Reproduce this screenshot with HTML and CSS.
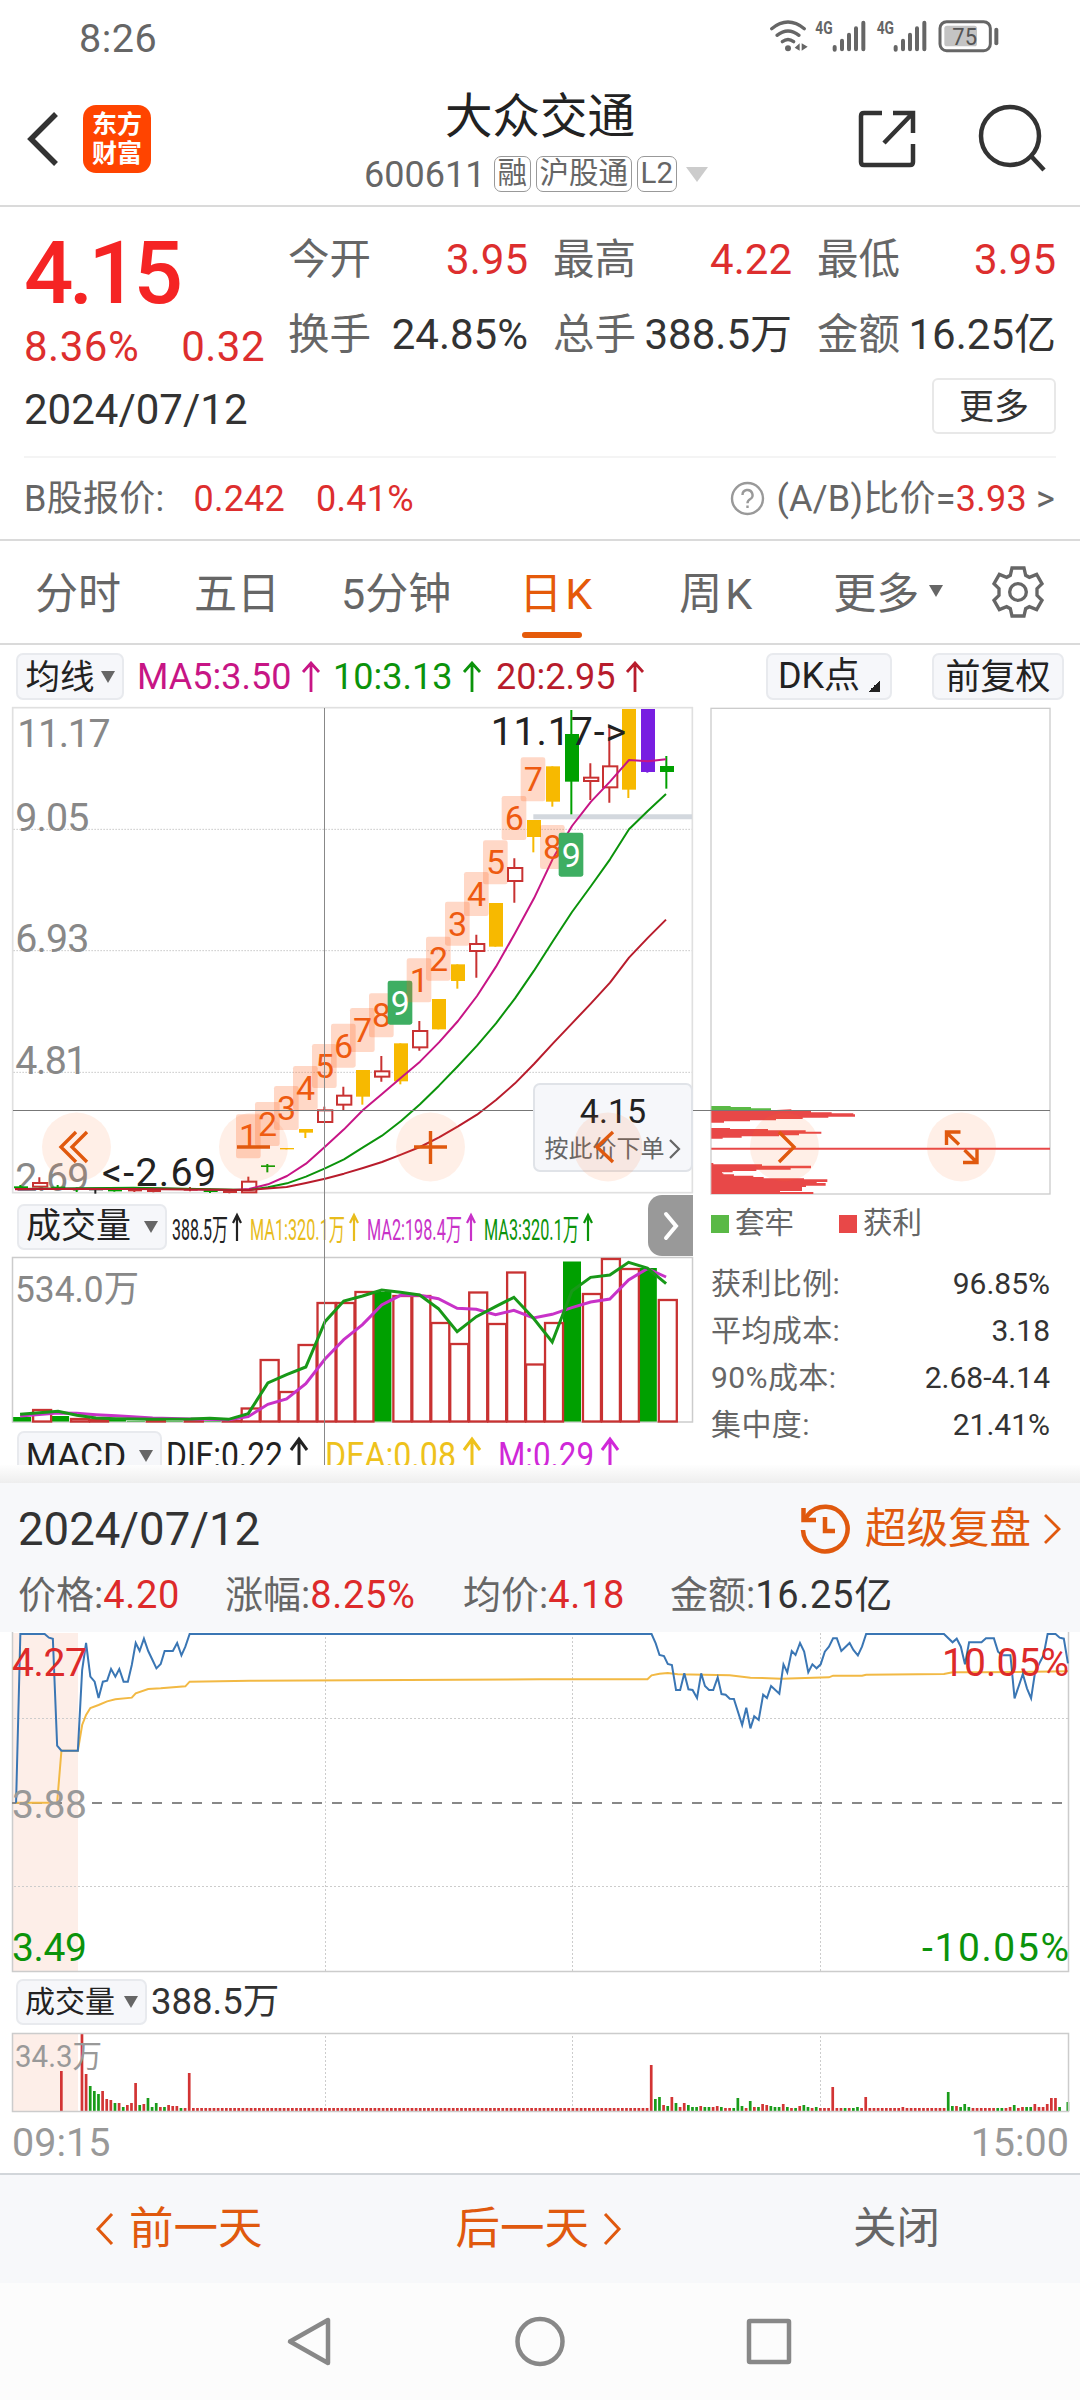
FILE: index.html
```html
<!DOCTYPE html>
<html lang="zh-CN">
<head>
<meta charset="utf-8">
<title>大众交通 600611</title>
<link rel="stylesheet" href="styles.css">
</head>
<body>
<header class="status">
  <span class="clock">8:26</span>
  <svg class="status-icons" width="250" height="50" viewBox="0 0 750 150" fill="none" stroke="#666" stroke-linecap="round">
    <path d="M35 56Q84 16 133 56M51 76Q84 50 117 76M67 95Q84 82 101 95" stroke-width="10"/>
    <circle cx="84" cy="115" r="9" fill="#666" stroke="none"/>
    <path d="M119 100v22l-15-9zM125 100v22l18-12z" fill="#666" stroke="none"/>
    <g stroke-width="12">
      <path d="M224 111v8M246 92v26M267 74v44M288 55v63M310 38v80"/>
      <path d="M407 111v8M429 92v26M450 74v44M471 55v63M493 38v80"/>
    </g>
    <g class="net" fill="#666" stroke="none">
      <text x="166" y="72" textLength="52" lengthAdjust="spacingAndGlyphs">4G</text>
      <text x="350" y="72" textLength="52" lengthAdjust="spacingAndGlyphs">4G</text>
    </g>
    <rect x="540" y="35" width="151" height="87" rx="20" stroke-width="9"/>
    <path d="M709 59v41" stroke-width="12"/>
    <rect x="553" y="47" width="98" height="62" rx="8" fill="#c4c4c4" stroke="none"/>
    <text class="pct" x="577" y="105" fill="#555" stroke="none" textLength="74" lengthAdjust="spacingAndGlyphs">75</text>
  </svg>
</header>

<nav class="topbar">
  <svg class="back" width="34" height="56" viewBox="0 0 34 56" fill="none" stroke="#333" stroke-width="5.500"><path d="M31 3L6 28l25 25"/></svg>
  <div class="logo"><span>东方</span><span>财富</span></div>
  <div class="stock">
    <h1>大众交通</h1>
    <div class="code"><span class="num">600611</span><span class="tag">融</span><span class="tag">沪股通</span><span class="tag">L2</span><i class="caret"></i></div>
  </div>
  <svg class="share" width="60" height="60" viewBox="0 0 60 60" fill="none" stroke="#333" stroke-width="4.5"><path d="M25 4H7q-3 0-3 3v46q0 3 3 3h46q3 0 3-3V35M36 4h20v20M55 5L27 34"/></svg>
  <svg class="search" width="70" height="70" viewBox="0 0 70 70" fill="none" stroke="#333" stroke-width="4.5"><circle cx="33" cy="33" r="29"/><path d="M54 53l13 14"/></svg>
</nav>

<section class="quote">
  <div class="quote-top">
    <div class="price">
      <strong>4.15</strong>
      <div class="change"><span>8.36%</span><span>0.32</span></div>
    </div>
    <dl class="metrics">
      <div><dt>今开</dt><dd class="up">3.95</dd></div>
      <div><dt>最高</dt><dd class="up">4.22</dd></div>
      <div><dt>最低</dt><dd class="up">3.95</dd></div>
      <div><dt>换手</dt><dd>24.85%</dd></div>
      <div><dt>总手</dt><dd>388.5万</dd></div>
      <div><dt>金额</dt><dd>16.25亿</dd></div>
    </dl>
  </div>
  <div class="quote-date"><span>2024/07/12</span><button class="more">更多</button></div>
  <div class="bshare">
    <span class="label">B股报价:</span><span class="up b1">0.242</span><span class="up b2">0.41%</span>
    <svg class="help" width="35" height="35" viewBox="0 0 35 35" fill="none" stroke="#999" stroke-width="2.4"><circle cx="17.500" cy="17.500" r="15.500"/><path d="M12.500 14a5 5 0 1 1 7.500 4.300q-2.500 1.500-2.500 4M17.500 24.500v2.500"/></svg>
    <span class="ratio">(A/B)比价=<b class="up">3.93</b></span><span class="gt">&gt;</span>
  </div>
</section>

<nav class="tabs">
  <span class="tab t1">分时</span><span class="tab t2">五日</span><span class="tab t3">5分钟</span><span class="tab t4 active">日K</span><span class="tab t5">周K</span><span class="tab t6">更多<i class="caret"></i></span>
  <svg class="gear" width="54" height="54" viewBox="454 17 162 162" fill="none" stroke="#666" stroke-width="10"><path d="M517 26H553L558 48L569 54L591 45L607 73L592 88V108L607 123L591 151L569 142L558 148L553 170H517L512 148L501 142L479 151L463 123L478 108V88L463 73L479 45L501 54L512 48Z"/><circle cx="535" cy="98" r="25"/></svg>
</nav>

<main class="charts">
  <div class="ma-row">
    <span class="chip ma-chip">均线<i class="caret"></i></span>
    <span class="ma m5">MA5:3.50<svg class="arr" viewBox="0 0 20 32"><path d="M10 31V2M2 11l8-9 8 9"/></svg></span>
    <span class="ma m10">10:3.13<svg class="arr" viewBox="0 0 20 32"><path d="M10 31V2M2 11l8-9 8 9"/></svg></span>
    <span class="ma m20">20:2.95<svg class="arr" viewBox="0 0 20 32"><path d="M10 31V2M2 11l8-9 8 9"/></svg></span>
    <span class="chip dk">DK点<i class="corner"></i></span>
    <span class="chip fq">前复权</span>
  </div>

  <div class="panes">
    <div class="left">
      <svg class="kline" width="700" height="500" viewBox="0 0 2100 1500">
        <rect x="38" y="23" width="2039" height="1455" fill="none" stroke="#e0e0e0" stroke-width="5"/>
        <path d="M40 388H2075M40 752H2075M40 1117H2075" stroke="#ccc" stroke-width="3" stroke-dasharray="5 4"/>
        <path d="M1600 350H2076" stroke="#d3d8de" stroke-width="15"/>
        <g class="axis">
          <text x="52" y="142" textLength="280">11.17</text>
          <text x="46" y="394" textLength="222">9.05</text>
          <text x="46" y="757" textLength="222">6.93</text>
          <text x="46" y="1122" textLength="216">4.81</text>
          <text x="46" y="1474" textLength="222">2.69</text>
        </g>
        <g id="candles"></g>
        <g class="line">
          <polyline stroke="#c71585" points="45,1468 400,1464 700,1470 747,1467 804,1453 861,1428 918,1391 975,1340 1032,1288 1089,1230 1146,1182 1203,1133 1260,1085 1317,1027 1374,963 1431,888 1488,800 1545,700 1602,595 1659,475 1716,378 1773,305 1830,245 1887,180 1944,184 1998,178"/>
          <polyline stroke="#0b930b" points="45,1467 400,1463 747,1470 804,1462 861,1450 918,1430 975,1405 1032,1378 1089,1342 1146,1307 1203,1263 1260,1213 1317,1157 1374,1098 1431,1037 1488,970 1545,895 1602,812 1659,723 1716,636 1773,558 1830,478 1887,388 1944,332 1998,282"/>
          <polyline stroke="#b81c2c" points="45,1467 400,1467 747,1470 860,1461 918,1449 975,1436 1032,1421 1089,1404 1146,1386 1203,1364 1260,1341 1317,1312 1374,1279 1431,1244 1488,1200 1545,1150 1602,1092 1659,1030 1716,970 1773,910 1830,848 1887,773 1944,713 1998,659"/>
        </g>
        <g id="counts"></g>
        <g class="mark">
          <text x="306" y="1457" textLength="342">&lt;-2.69</text>
          <text x="1472" y="135" textLength="406">11.17-&gt;</text>
        </g>
      </svg>
      <div class="ind-row">
        <span class="chip vol-chip">成交量<i class="caret"></i></span>
        <svg class="ind" width="460" height="50" viewBox="170 1200 460 50">
          <text x="172" y="1239" fill="#222" textLength="56" lengthAdjust="spacingAndGlyphs">388.5万</text>
          <text x="250" y="1239" fill="#e8bc1c" textLength="95" lengthAdjust="spacingAndGlyphs">MA1:320.1万</text>
          <text x="367" y="1239" fill="#c832c8" textLength="95" lengthAdjust="spacingAndGlyphs">MA2:198.4万</text>
          <text x="484" y="1239" fill="#0b930b" textLength="95" lengthAdjust="spacingAndGlyphs">MA3:320.1万</text>
          <g fill="none" stroke-width="2.200"><path stroke="#222" d="M237 1240v-26m-4 8l4-8 4 8"/><path stroke="#e8bc1c" d="M354 1240v-26m-4 8l4-8 4 8"/><path stroke="#c832c8" d="M471 1240v-26m-4 8l4-8 4 8"/><path stroke="#0b930b" d="M588 1240v-26m-4 8l4-8 4 8"/></g>
        </svg>
      </div>
      <svg class="volume" width="700" height="170" viewBox="0 1255 700 170">
        <rect x="12.500" y="1257.500" width="680" height="164.500" fill="none" stroke="#ccc" stroke-width="1.500"/>
        <text class="axis-sm" x="15" y="1302" textLength="124" lengthAdjust="spacingAndGlyphs">534.0万</text>
        <g id="volbars"></g>
        <g class="vline" transform="translate(0 1190) scale(.446429 .333333)">
          <polyline stroke="#c832c8" points="45,678 130,669 172,670 215,674 260,677 342,684 427,687 512,689 556,680 600,643 642,627 685,581 728,507 770,449 812,404 855,345 897,316 940,316 982,326 1024,355 1067,358 1110,374 1151,361 1195,384 1237,373 1281,353 1323,336 1366,327 1408,270 1450,236 1492,261"/>
          <polyline stroke="#189818" points="45,673 88,668 130,664 172,676 215,684 260,686 342,688 427,687 470,685 512,688 556,671 600,579 642,554 685,531 728,395 770,333 812,318 855,300 897,307 940,315 982,356 1024,425 1067,380 1110,350 1151,322 1195,385 1237,456 1281,303 1323,262 1366,255 1408,217 1450,234 1492,281"/>
        </g>
      </svg>
      <div class="macd-row">
        <span class="chip macd-chip">MACD<i class="caret"></i></span>
        <svg class="macd" width="470" height="34" viewBox="160 1431 470 34">
          <g stroke="none"><text x="166" y="1468" fill="#222" textLength="117" lengthAdjust="spacingAndGlyphs">DIF:0.22</text>
          <text x="325" y="1468" fill="#eec21c" textLength="131" lengthAdjust="spacingAndGlyphs">DEA:0.08</text>
          <text x="498" y="1468" fill="#d028d8" textLength="96" lengthAdjust="spacingAndGlyphs">M:0.29</text></g>
          <g fill="none" stroke-width="3"><path stroke="#222" d="M299 1466v-27m-8 11l8-11 8 11"/><path stroke="#eec21c" d="M472 1466v-27m-8 11l8-11 8 11"/><path stroke="#d028d8" d="M610 1466v-27m-8 11l8-11 8 11"/></g>
        </svg>
      </div>
    </div>

    <div class="right">
      <svg class="costs" width="380" height="500" viewBox="2100 0 1140 1500">
        <rect x="2133" y="25" width="1017" height="1457" fill="none" stroke="#ccc" stroke-width="4"/>
        <g transform="translate(2070 1140)">
          <path fill="#5ab946" d="M64 78H122V81H183V85H243V91H64Z"/>
          <path fill="#e84848" d="M64 91H245L304 88V91H363V97H425V100H490V103H495V110H415V113H338V117H258V121H180V124H102V128H64ZM64 144H120V147H234V151H347V155H394V161H327V166H267V169H155V173H98V176H64ZM64 203H1080V209H64ZM64 249H70V253H216V257H363V265H302V269H199V273H128V277H96V280H100V283H132V287H190V291H221V295H342V298H412V306H380V309H407V317H348V321H336V333H270V336H370V342H64Z"/>
        </g>
      </svg>
      <div class="legend"><span><i class="sq g"></i>套牢</span><span><i class="sq r"></i>获利</span></div>
      <dl class="stats">
        <div><dt>获利比例:</dt><dd>96.85%</dd></div>
        <div><dt>平均成本:</dt><dd>3.18</dd></div>
        <div><dt>90%成本:</dt><dd>2.68-4.14</dd></div>
        <div><dt>集中度:</dt><dd>21.41%</dd></div>
      </dl>
    </div>

    <i class="cross-h"></i><i class="cross-v"></i>
    <div class="order"><b>4.15</b><span>按此价下单<svg width="14" height="22" viewBox="0 0 14 22" fill="none" stroke="#666" stroke-width="2.200"><path d="M2 2l9 9-9 9"/></svg></span></div>
    <span class="side-handle"><svg width="16" height="30" viewBox="0 0 16 30" fill="none" stroke="#fff" stroke-width="4" stroke-linecap="round"><path d="M3 3l10 12L3 27"/></svg></span>
    <svg class="tools" width="1080" height="80" viewBox="0 0 1080 80" fill="none" stroke="#e0590e" stroke-width="3.400">
      <g fill="#ff7020" fill-opacity=".11" stroke="none"><circle cx="76.500" cy="40" r="34.500"/><circle cx="253.500" cy="40" r="34.500"/><circle cx="430.500" cy="40" r="34.500"/><circle cx="608" cy="40" r="34.500"/><circle cx="784.500" cy="40" r="34.500"/><circle cx="961.500" cy="40" r="34.500"/></g>
      <path d="M76 25L61 40l15 15M87 25L72 40l15 15M237 40h33M414 40h33M430.500 24v33M613 25l-16 15 16 15M779 25l15 15-15 15"/>
      <path d="M946.500 38V25h14M947 26l12 11.500M964.500 43l12 12M963 55.500h14V42"/>
    </svg>
  </div>
</main>

<section class="day">
  <div class="day-head">
    <div class="day-title"><span class="date">2024/07/12</span>
      <svg class="replay" width="52" height="52" viewBox="0 0 52 52" fill="none" stroke="#e0590e" stroke-width="4.500"><path d="M4 27A22.300 22.300 0 1 0 9 12L6 16"/><path d="M4.500 5v12H17M26 14v14h10" /></svg>
      <span class="replay-text">超级复盘</span>
      <svg class="chev" width="20" height="32" viewBox="0 0 20 32" fill="none" stroke="#e0590e" stroke-width="2.800"><path d="M2 2l14 14L2 30"/></svg>
    </div>
    <div class="day-data"><span class="d1">价格:<b class="up">4.20</b></span><span class="d2">涨幅:<b class="up">8.25%</b></span><span class="d3">均价:<b class="up">4.18</b></span><span class="d4">金额:<b>16.25亿</b></span></div>
  </div>
  <svg class="intraday" width="1080" height="342" viewBox="0 1632 1080 342">
    <rect x="12" y="1633" width="66" height="338" fill="#fdeee8"/>
    <path d="M12.500 1632V1971.500H1068.500V1632" fill="none" stroke="#ccc" stroke-width="1.500"/>
    <path d="M14 1718.500H1068M14 1886.500H1068M325.500 1637V1971M572.500 1633V1971M820.500 1633V1971" stroke="#ccc" stroke-dasharray="2 2"/>
    <path d="M92 1803H1066" stroke="#888" stroke-width="2" stroke-dasharray="10 10"/>
    <path d="M12 1803H62" stroke="#888" stroke-width="2" stroke-dasharray="10 10"/>
    <g class="series">
      <g transform="translate(0 1470) scale(.357143 .333333)">
        <polyline stroke="#f2b944" points="45,998 160,998 172,842 218,842 230,765 241,735 253,714 276,705 300,694 323,688 369,683 380,670 415,657 450,655 519,649 531,635 700,632 1512,628"/>
        <polyline stroke="#3a76b4" points="45,998 57,492 125,492 137,503 148,506 160,827 172,842 218,842 230,600 241,519 253,620 265,635 276,684 288,635 300,632 311,597 323,620 334,597 346,635 358,635 369,585 380,519 391,543 403,506 415,543 427,570 438,595 450,582 461,543 484,543 496,519 508,556 519,530 531,492 1512,492"/>
      </g>
      <g transform="translate(540 1470) scale(.344388 .333333)">
        <polyline stroke="#f2b944" points="0,628 312,628 324,616 347,611 371,609 400,613 551,616 611,623 700,626 839,622 851,617 935,617 947,614 1173,612 1198,607 1282,607 1533,604"/>
        <polyline stroke="#3a76b4" points="0,492 324,492 336,520 347,555 360,558 371,582 383,585 395,660 407,660 419,610 431,658 443,660 456,684 468,610 479,648 491,660 503,660 516,622 527,672 539,674 551,686 563,687 587,765 599,713 611,775 622,739 635,750 648,674 659,684 671,648 695,671 707,583 718,607 731,543 742,555 755,519 767,545 779,607 791,583 803,595 815,583 827,545 839,530 851,505 862,505 875,543 899,519 910,540 923,556 935,530 947,492 1173,492 1198,517 1210,506 1222,530 1234,583 1246,517 1282,517 1295,505 1318,505 1330,545 1342,556 1366,556 1378,685 1402,612 1414,655 1426,685 1437,610 1450,580 1462,556 1474,492 1497,492 1509,503 1521,506 1533,580"/>
      </g>
    </g>
    <g class="scale">
      <text x="12" y="1676" fill="#dd2a2a" textLength="75">4.27</text>
      <text x="12" y="1818" fill="#999" textLength="75">3.88</text>
      <text x="12" y="1961" fill="#0b930b" textLength="75">3.49</text>
      <text x="942" y="1676" fill="#dd2a2a" textLength="127">10.05%</text>
      <text x="922" y="1961" fill="#0b930b" textLength="147">-10.05%</text>
    </g>
  </svg>
  <div class="dvol-row"><span class="chip dvol-chip">成交量<i class="caret"></i></span><span class="dvol">388.5万</span></div>
  <svg class="dayvol" width="1080" height="82" viewBox="0 2032 1080 82">
    <rect x="12" y="2034" width="66" height="78" fill="#fdeee8"/>
    <path d="M325.500 2037V2111M572.500 2037V2111M820.500 2037V2111" stroke="#ccc" stroke-dasharray="2 2"/>
    <g id="daybars"></g>
    <rect x="12.500" y="2034.500" width="1056" height="78" fill="none" stroke="#ccc" stroke-width="1.500"/>
    <text x="15" y="2068" class="axis-xs" textLength="87" lengthAdjust="spacingAndGlyphs">34.3万</text>
  </svg>
  <div class="hours"><span>09:15</span><span>15:00</span></div>
</section>

<footer class="pager">
  <span class="prev"><svg width="20" height="32" viewBox="0 0 20 32" fill="none" stroke="#e0590e" stroke-width="3"><path d="M17 1L3 16l14 15"/></svg>前一天</span>
  <span class="next">后一天<svg width="20" height="32" viewBox="0 0 20 32" fill="none" stroke="#e0590e" stroke-width="3"><path d="M3 1l14 15L3 31"/></svg></span>
  <span class="close">关闭</span>
</footer>
<div class="sysnav">
  <svg width="1080" height="118" viewBox="0 2282 1080 118" fill="none" stroke="#888" stroke-width="4.500" stroke-linejoin="round"><path d="M328 2319V2362L290 2340.500Z"/><circle cx="540" cy="2340.500" r="22.500"/><rect x="749" y="2320" width="40" height="41" rx="1"/></svg>
</div>
<script src="charts.js"></script>
</body>
</html>
```
FILE: styles.css
```css
* { box-sizing: border-box; margin: 0; padding: 0; }
body { width: 1080px; height: 2400px; overflow: hidden; background: #fff; color: #333; font-family: Roboto, "Noto Sans CJK SC", sans-serif; line-height: 1; white-space: nowrap; }
svg { display: block; flex: none; }
b, h1 { font-weight: 400; }
i { font-style: normal; }
button { font: inherit; color: inherit; }
.up { color: #dd2e2e; }
.caret { display: inline-block; width: 0; height: 0; border: solid transparent; border-width: 12px 7.5px 0; border-top-color: #666; }

.status { height: 75px; display: flex; align-items: center; justify-content: space-between; padding-left: 79px; color: #666; }
.clock { font-size: 39.500px; padding-top: 3px; letter-spacing: .5px; }
.status-icons { margin: -5px 70px 0 0; }
.net { font-size: 54px; font-weight: 700; }
.pct { font-size: 70px; }

.topbar { height: 132px; display: flex; border-bottom: 2px solid #dadada; position: relative; }
.back { margin: 36px 0 0 25px; }
.logo { margin: 30px 0 0 24px; width: 68px; height: 68px; border-radius: 13px; background: #ff4400; color: #fff; font-size: 25px; font-weight: 700; display: flex; flex-direction: column; align-items: center; justify-content: center; gap: 4px; }
.stock { margin-left: 213px; width: 355px; }
.stock h1 { font-size: 47.500px; line-height: 56px; margin: 14px 0 0 81px; color: #222; }
.code { display: flex; align-items: center; color: #666; margin-top: 10px; height: 38px; }
.code .num { font-size: 36px; width: 130px; padding-top: 2px; }
.tag { height: 36px; line-height: 33px; border: 1.500px solid #999; border-radius: 7px; font-size: 29.500px; padding: 0 2.500px; margin-right: 5.500px; }
.code .caret { border-width: 15px 11px 0; border-top-color: #ccc; margin-left: 4px; }
.share { margin: 34px 0 0 138px; }
.search { margin: 28px 0 0 60px; }

.quote { height: 334px; border-bottom: 2px solid #dadada; }
.quote-top { display: flex; height: 167px; }
.price { width: 288px; padding: 23px 0 0 24px; color: #f52424; }
.price strong { display: block; font-size: 87px; font-weight: 500; letter-spacing: -4.500px; line-height: 87px; }
.change { display: flex; gap: 42px; font-size: 42px; letter-spacing: .500px; line-height: 42px; margin-top: 9px; color: #dd2e2e; }
.metrics { width: 768px; display: grid; grid-template-columns: 240px 239px 239px; column-gap: 25px; grid-auto-rows: 75px; padding-top: 15px; font-size: 42px; }
.metrics div { display: flex; justify-content: space-between; align-items: center; }
.metrics dt { color: #666; font-size: 41.500px; }
.quote-date { height: 84px; margin: 0 24px; display: flex; align-items: center; justify-content: space-between; font-size: 42px; border-bottom: 2px solid #f4f4f4; }
.quote-date span { margin-top: -11px; }
.more { width: 124px; height: 56px; border: 2px solid #e8e8e8; border-radius: 6px; background: #fff; font-size: 35px; margin-top: -19px; padding-top: 3px; }
.bshare { height: 80px; display: flex; align-items: center; padding: 1px 24px 0; font-size: 36px; letter-spacing: .25px; color: #666; }
.b1 { margin-left: 29px; } .b2 { margin-left: 31px; }
.help { margin-left: auto; margin-right: 11px; }
.gt { margin-left: 9px; width: 20px; }

.tabs { height: 104px; border-bottom: 2px solid #dadada; display: flex; color: #666; font-size: 43px; }
.tab { line-height: 107px; position: relative; height: 104px; }
.t1 { margin-left: 35px; } .t2 { margin-left: 73px; } .t3 { margin-left: 61px; } .t4 { margin-left: 68px; } .t5 { margin-left: 84px; } .t6 { margin-left: 78px; }
.t4, .t5 { letter-spacing: 3px; }
.tab .caret { margin-left: 10px; vertical-align: 12px; }
.active { color: #e55a0a; }
.active::after { content: ""; position: absolute; left: 3px; bottom: 7px; width: 60px; height: 6px; border-radius: 3px; background: #e55a0a; }
.gear { margin: 24px 35px 0 auto; }

.charts { height: 838px; background: #fff; overflow: hidden; position: relative; }
.charts::after { content: ""; position: absolute; left: 0; right: 0; bottom: 0; height: 18px; background: linear-gradient(#fefefe, #eee); }
.ma-row { height: 54px; padding-top: 8px; display: flex; align-items: center; font-size: 36px; }
.chip { display: flex; flex: none; align-items: center; justify-content: center; background: #f6f7fa; border: 2px solid #e8eaee; border-radius: 7px; color: #222; }
.ma-chip { margin-left: 16px; width: 108px; height: 47px; font-size: 34.500px; gap: 6px; padding-top: 2px; }
.ma { display: flex; align-items: center; padding-top: 2px; }
.arr { width: 20px; height: 32px; margin-left: 10px; fill: none; stroke: currentColor; stroke-width: 2.800; }
.m5 { color: #c71585; margin-left: 13px; width: 196px; }
.m10 { color: #0b930b; width: 163px; }
.m20 { color: #b81c2c; width: 154px; }
.dk { margin-left: 116px; width: 126px; height: 47px; font-size: 36px; }
.corner { width: 12px; height: 12px; background: linear-gradient(135deg, transparent 50%, #222 50%); margin: 20px 0 0 8px; }
.fq { margin-left: 40px; width: 132px; height: 47px; font-size: 35px; padding-top: 2px; }
.panes { display: flex; position: relative; height: 766px; overflow: hidden; }
.left { width: 700px; margin-top: 1px; }
.right { width: 380px; margin-top: 1px; }
.axis { font-size: 118px; fill: #888; }
.mark { font-size: 118px; fill: #222; }
.line polyline { fill: none; stroke-width: 6; stroke-linejoin: round; }
.vline polyline, .series polyline { fill: none; vector-effect: non-scaling-stroke; stroke-width: 2; }
.vline polyline { stroke-width: 3; }
.cnt { font-size: 102px; fill: #ee5a10; text-anchor: middle; }
.cnt.done { fill: #fff; }
.axis-sm { font-size: 37px; fill: #888; }
.ind-row { display: flex; height: 55px; align-items: center; }
.kline, .costs { height: 500px; }
.vol-chip { margin: -2px 0 0 17px; width: 150px; height: 46px; font-size: 35px; gap: 13px; }
.ind { margin: -4px 0 0 3px; font-size: 30px; }
.macd-row { display: flex; height: 42px; padding-top: 6px; overflow: hidden; }
.macd-chip { margin-left: 17px; width: 145px; height: 50px; font-size: 35.500px; gap: 13px; align-items: flex-start; line-height: 46px; }
.macd-chip .caret { margin-top: 17px; }
.macd { margin-left: -2px; font-size: 37px; }
.legend { height: 48px; display: flex; padding-left: 11px; gap: 45px; font-size: 29.500px; color: #666; align-items: center; }
.legend span { display: flex; align-items: center; gap: 6px; }
.sq { width: 18px; height: 18px; } .g { background: #5ab946; } .r { background: #e84848; }
.stats { padding: 12px 30px 0 11px; font-size: 30px; }
.stats div { height: 47px; display: flex; align-items: center; justify-content: space-between; }
.stats dt { color: #666; font-size: 30px; letter-spacing: .4px; }
.cross-h, .cross-v, .order, .side-handle, .tools { position: absolute; }
.cross-h { left: 13px; top: 411px; width: 1037px; height: 1px; background: #777; }
.cross-v { left: 324px; top: 9px; width: 1px; height: 757px; background: #888; }
.order { left: 533px; top: 384px; width: 160px; height: 89px; background: #f6f7fa; border: 2px solid #e0e3e8; border-radius: 7px; text-align: center; padding-top: 9px; color: #222; }
.order b { font-size: 34px; line-height: 34px; display: block; }
.order span { display: flex; align-items: center; justify-content: center; gap: 3px; font-size: 24px; color: #666; margin-top: 9px; }
.side-handle { left: 648px; top: 496px; width: 45px; height: 61px; background: #999; border-radius: 14px 0 0 14px; display: flex; align-items: center; justify-content: center; }
.tools { left: 0; top: 408px; }

.day { height: 690px; background: #fff; }
.day-head { height: 149px; background: #f7f8fa; }
.day-title { display: flex; align-items: center; height: 91px; padding-left: 18px; }
.date { font-size: 45.500px; margin-right: auto; padding-top: 2px; }
.replay-text { font-size: 41.500px; color: #e0590e; margin: 0 12px 0 14px; }
.chev { margin-right: 17px; }
.day-data { display: flex; height: 42px; align-items: center; font-size: 38px; color: #666; }
.day-data b { color: #333; letter-spacing: .700px; } .day-data .up { color: #dd2a2a; }
.d1 { margin-left: 18px; width: 207px; } .d2 { width: 238px; } .d3 { width: 207px; }
.scale { font-size: 39px; }
.dvol-row { height: 57px; display: flex; padding-top: 5px; align-items: flex-start; font-size: 36.500px; }
.dvol-chip { margin-left: 16px; width: 131px; height: 46px; font-size: 30px; gap: 9px; }
.dvol { line-height: 46px; margin-left: 4px; }
.axis-xs { font-size: 31px; fill: #999; }
.hours { height: 60px; display: flex; justify-content: space-between; align-items: center; padding: 0 11px 0 12px; color: #999; font-size: 39.500px; }

.pager { height: 110px; background: #f7f8fa; border-top: 2px solid #d2d6da; display: flex; align-items: center; font-size: 44.500px; color: #e0590e; }
.pager span { display: flex; align-items: center; }
.prev { margin-left: 95px; gap: 14px; }
.next { margin-left: 193px; gap: 13px; }
.close { margin-left: 231px; color: #666; font-size: 43.500px; }
.sysnav { height: 118px; background: #fcfcfc; }
```
FILE: charts.js
```js
const NS = "http://www.w3.org/2000/svg";
function add(parent, tag, attrs, text) {
  const el = document.createElementNS(NS, tag);
  for (const k in attrs) el.setAttribute(k, attrs[k]);
  if (text) el.textContent = text;
  parent.appendChild(el);
}

// kind, centre x, body top, body bottom, wick top, wick bottom
const candles = [
  ["g", 63, 1459, 1465, 1455, 1470], ["h", 120, 1449, 1460, 1432, 1462], ["g", 175, 1460, 1466, 1455, 1470],
  ["g", 232, 1464, 1470, 1462, 1476], ["k", 288, 1466, 1471, 1464, 1481], ["g", 345, 1469, 1474, 1466, 1475],
  ["r", 405, 1468, 1474, 1466, 1476], ["r", 462, 1470, 1476, 1468, 1477], ["r", 572, 1466, 1472, 1461, 1474],
  ["g", 632, 1470, 1476, 1466, 1479], ["r", 690, 1472, 1479, 1470, 1480],
  ["h", 747, 1445, 1477, 1430, 1445], ["g", 804, 1396, 1401, 1392, 1417], ["y", 861, 1344, 1348, 1344, 1348],
  ["y", 918, 1287, 1298, 1287, 1314], ["h", 975, 1231, 1266, 1220, 1231], ["h", 1032, 1187, 1214, 1160, 1230],
  ["y", 1089, 1110, 1190, 1110, 1214], ["h", 1146, 1114, 1130, 1068, 1145], ["y", 1203, 1030, 1144, 1030, 1153],
  ["h", 1260, 993, 1042, 963, 1052], ["y", 1317, 897, 988, 897, 988], ["y", 1374, 793, 843, 793, 866],
  ["h", 1431, 732, 753, 704, 833], ["y", 1488, 609, 740, 609, 740], ["h", 1545, 504, 543, 475, 608],
  ["y", 1602, 360, 411, 360, 457], ["y", 1659, 199, 305, 199, 320], ["g", 1716, 102, 245, 30, 343],
  ["h", 1773, 233, 243, 190, 300], ["h", 1830, 199, 262, 75, 308], ["y", 1887, 27, 269, 27, 294],
  ["p", 1944, 27, 216, 27, 218], ["g", 2001, 198, 216, 168, 266]
];
const tone = { g: "#00a000", h: "#c83232", r: "#c83232", k: "#222", y: "#f7b900", p: "#781ee1" };
const kc = document.getElementById("candles");
candles.forEach(([kind, x, top, bottom, hi, lo]) => {
  const c = tone[kind];
  if (kind === "h") {
    add(kc, "path", { d: `M${x - 2} ${hi}V${top}M${x - 2} ${bottom}V${Math.max(lo, bottom)}`, stroke: c, "stroke-width": 6 });
    add(kc, "rect", { x: x - 21, y: top, width: 43, height: bottom - top, fill: "#fff", stroke: c, "stroke-width": 6 });
  } else {
    add(kc, "path", { d: `M${x - 2} ${hi}V${lo}`, stroke: c, "stroke-width": 6 });
    add(kc, "rect", { x: x - 21, y: top, width: 42, height: bottom - top, fill: c });
  }
});

// sequence counters: label, left, top
const counts = [
  [1, 708, 1243], [2, 765, 1206], [3, 822, 1158], [4, 879, 1098], [5, 936, 1032], [6, 993, 971], [7, 1050, 924],
  [8, 1107, 880], [9, 1163, 842], [1, 1220, 775], [2, 1278, 710], [3, 1335, 605], [4, 1392, 516], [5, 1449, 421],
  [6, 1505, 288], [7, 1562, 172], [8, 1620, 375], [9, 1676, 398]
];
const cc = document.getElementById("counts");
counts.forEach(([n, x, y]) => {
  const done = n === 9;
  add(cc, "rect", { x, y, width: 74, height: 132, rx: 7, fill: done ? "#3eae62" : "#ff6420", "fill-opacity": done ? 1 : .25 });
  add(cc, "text", { x: x + 38, y: y + 102, class: done ? "cnt done" : "cnt" }, String(n));
});

// daily volume bars, newest first: top, kind
const vols = [
  [1299, "r"], [1268, "g"], [1268, "r"], [1258, "r"], [1293, "r"], [1261.5, "g"], [1322, "r"], [1363.5, "r"],
  [1271.5, "r"], [1323, "r"], [1291.5, "r"], [1343, "r"], [1322, "r"], [1295, "r"], [1295, "r"], [1292, "g"],
  [1291, "r"], [1302, "r"], [1302, "r"], [1344, "r"], [1391, "r"], [1359, "r"], [1407.5, "r"], [1420, "r"],
  [1421, "g"], [1420, "r"], [1421, "g"], [1420, "r"], [1421, "g"], [1420, "g"], [1419, "r"], [1418, "r"],
  [1416, "g"], [1409, "r"], [1417, "g"]
];
const vb = document.getElementById("volbars");
vols.forEach(([top, kind], i) => {
  const x = Math.max(657.8 - i * 18.96, 13);
  if (kind === "g") add(vb, "rect", { x, y: top, width: 18, height: 1421.5 - top, fill: "#00a000" });
  else add(vb, "rect", { x: x + 1, y: top + 1, width: 18, height: Math.max(1420.5 - top, .5), fill: "#fff", stroke: "#c83232", "stroke-width": 2.3 });
});

// one bar a minute; heights in px, sign gives the colour
const special = {
  0: 40, 5: 78, 6: 37, 7: -25, 8: -20, 9: -17, 10: 20, 11: 12, 12: 11, 13: -8, 14: 8, 15: -4, 16: 6, 17: 8, 18: 28,
  19: -6, 20: 7, 21: -13, 22: -4, 23: -8, 24: 4, 25: -4, 26: 6, 27: 5, 28: 5, 29: -3, 30: 3, 31: 38,
  143: 46, 144: -12, 145: -14, 146: 6, 147: -5, 148: 14, 149: -8, 150: 4, 151: 8, 152: -6, 153: -4, 154: -4, 155: 5,
  156: -4, 157: -4, 158: 4, 159: 5, 160: -4, 163: -3, 164: -13, 165: -5, 166: 3, 167: -10, 168: 4, 169: -4, 170: 7, 171: 6,
  172: -5, 173: -4, 174: -4, 175: 7, 176: -4, 178: -3, 179: 5, 180: -6, 181: -4, 183: -4, 187: 24, 190: -3, 192: -3, 193: -4, 195: 14,
  204: 4, 215: -19, 216: -5, 217: 5, 218: -4, 219: -7, 220: -4, 227: -3, 228: -3, 230: 4, 231: -6, 232: 3, 233: 4, 234: -4,
  235: -4, 236: 7, 237: 4, 238: 4, 239: 7, 240: 13, 241: 13, 242: -4, 243: 0, 244: -9
};
const db = document.getElementById("daybars");
for (let i = 0; i <= 244; i++) {
  if (i > 0 && i < 5) continue;
  const h = i in special ? special[i] : 3;
  add(db, "rect", { x: 60 + i * 4.125, y: 2112 - Math.abs(h), width: 2.7, height: Math.abs(h), fill: h < 0 ? "#1a9c1a" : "#d23434" });
}
```
